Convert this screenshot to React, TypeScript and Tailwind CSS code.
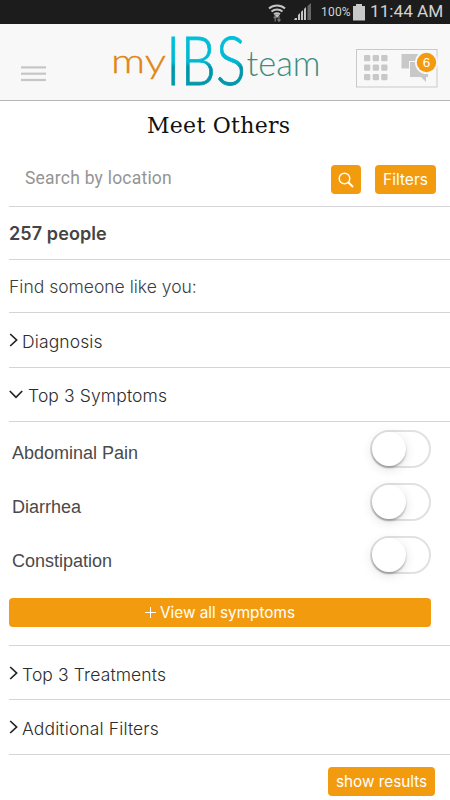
import React, { useState } from "react";

const sans = "font-['Inter','Liberation_Sans',sans-serif]";

function StatusBar() {
  return (
    <div className="flex h-[24px] shrink-0 items-center bg-[#1c1c1c] pl-[268px] text-[#d2d2d2] font-['Roboto',sans-serif]">
      <svg width="18" height="22" viewBox="0 0 18 22" fill="none">
        <path d="M1 7.5a12 12 0 0 1 16 0M3.5 10.5a8.500 8.500 0 0 1 11 0M6 13.300a5 5 0 0 1 6 0" stroke="#c4c4c4" strokeWidth="2" />
        <path d="M9 17 6.500 14.200a4 4 0 0 1 5 0z" fill="#c4c4c4" />
        <path d="M7.200 20.500v-5M5.700 17l1.500-1.800L8.700 17M11 15v5M9.500 18.400l1.500 1.800 1.500-1.800" stroke="#777" strokeWidth="1.200" />
      </svg>
      <svg className="ml-[8px]" width="17" height="18" viewBox="0 0 17 18">
        <path d="M1 15h2v2H0zM4 12l2-2v7H4zM7 9l2-2v10H7zM10 6l2-2v13h-2z" fill="#c4c4c4" />
        <path d="M13.500 3 17 0v17h-3.500z" fill="#666" />
      </svg>
      <span className="ml-[10px] w-[30px] whitespace-nowrap text-[12px] leading-none tracking-[0.2px]">100%</span>
      <svg className="ml-[2px]" width="12" height="17" viewBox="0 0 12 17">
        <path d="M3 0h6v2h3v14.500H0V2h3z" fill="#c8c8c8" />
      </svg>
      <span className="ml-[5px] whitespace-nowrap text-[17.2px] leading-none">11:44 AM</span>
    </div>
  );
}

function Logo() {
  return (
    <svg className="overflow-visible" width="220" height="76" viewBox="107 24 220 76">
      <defs>
        <linearGradient id="teal" x1="0" y1="-48" x2="0" y2="0" gradientUnits="userSpaceOnUse">
          <stop offset="0" stopColor="#00c0d9" />
          <stop offset="0.520" stopColor="#00b8d1" />
          <stop offset="0.620" stopColor="#0095a8" />
          <stop offset="1" stopColor="#0099ac" />
        </linearGradient>
      </defs>
      <text x="111" y="73" textLength="55" lengthAdjust="spacingAndGlyphs" fontSize="33" fontWeight="300" fill="#e08612" stroke="#e08612" strokeWidth=".3" fontFamily="Lato, sans-serif">my</text>
      <text transform="translate(166 85) scale(.835 1)" fontSize="67" fontWeight="300" fill="url(#teal)" stroke="url(#teal)" strokeWidth=".8" fontFamily="Lato, sans-serif">IBS</text>
      <text x="246.500" y="76" textLength="74" lengthAdjust="spacingAndGlyphs" fontSize="36" fontWeight="300" fill="#3e8c82" fontFamily="Lato, sans-serif">team</text>
    </svg>
  );
}

function Header() {
  return (
    <header className="flex h-[77px] shrink-0 items-start border-b border-[#b5b5b5] bg-[#f8f8f8]">
      <button aria-label="Menu" className="ml-[21px] mt-[42px]">
        <svg width="25" height="16" viewBox="0 0 25 16" fill="#c6c6c6">
          <rect y="0.300" width="25" height="2.200" />
          <rect y="6.600" width="25" height="2.200" />
          <rect y="12.900" width="25" height="2.200" />
        </svg>
      </button>
      <div className="ml-[61px]">
        <Logo />
      </div>
      <svg className="ml-[28px] mt-[24px]" width="84" height="40" viewBox="355 48 84 40">
        <rect x="356.500" y="49.500" width="80.500" height="37.500" fill="none" stroke="#c9c9c9" />
        {[55, 64.500, 74].map((y) =>
          [364, 372.700, 381.200].map((x) => <rect key={`${x}-${y}`} x={x} y={y} width="6.300" height="6.300" rx="1.300" fill="#c8c8c8" />)
        )}
        <path d="M401.500 54H420v7h-11v7.500h-7.500z" fill="#c8c8c8" />
        <path d="M410 62h18v15h-2v5l-5-5h-11z" fill="#c8c8c8" />
        <circle cx="426.500" cy="62.500" r="11.500" fill="#f8f8f8" />
        <circle cx="426.500" cy="62.500" r="9.700" fill="#f39b0f" />
        <text x="426.500" y="67.300" textAnchor="middle" fontSize="13.500" fill="#fff" fontFamily="'Liberation Sans', sans-serif">6</text>
      </svg>
    </header>
  );
}

function Section({ label, open = false, className }: { label: string; open?: boolean; className: string }) {
  return (
    <button className={`flex w-full items-center border-b border-[#d4d4d4] text-left text-[17.5px] font-light tracking-[0.12px] text-[#2d2d2d] ${className}`}>
      {open ? (
        <svg className="-mt-[4px] mr-[5px]" width="14" height="10" viewBox="0 0 14 10" fill="none" stroke="#222" strokeWidth="1.700">
          <path d="M.8 1 7 7.300 13.200 1" />
        </svg>
      ) : (
        <svg className="-mt-[5px] mr-[4px]" width="9" height="14" viewBox="0 0 9 14" fill="none" stroke="#222" strokeWidth="1.700">
          <path d="M1.200 1 7.600 7l-6.400 6" />
        </svg>
      )}
      <span>{label}</span>
    </button>
  );
}

function Toggle({ label }: { label: string }) {
  const [on, setOn] = useState(false);
  return (
    <button
      role="switch"
      aria-label={label}
      aria-checked={on}
      onClick={() => setOn(!on)}
      className={`flex h-[38px] w-[61px] items-center rounded-full border-2 border-[#e1e1e1] bg-white ${on ? "justify-end" : ""}`}
    >
      <span className="size-[34px] rounded-full bg-white shadow-[0_2px_2px_rgba(0,0,0,0.25),0_3px_12px_rgba(0,0,0,0.12)]" />
    </button>
  );
}

export default function App() {
  return (
    <div className={`flex h-[800px] w-[450px] flex-col overflow-hidden bg-white ${sans}`}>
      <StatusBar />
      <Header />
      <h1 className="h-[52px] pl-[147px] pt-[9px] text-[22px] leading-[32px] tracking-[0.28px] text-[#111] font-['DejaVu_Serif',serif]">Meet Others</h1>
      <main className="flex flex-col pl-[9px] text-[17.5px] text-[#3d3d3d]">
        <div className="flex h-[54px] items-start border-b border-[#d4d4d4] pt-[12px]">
          <input
            aria-label="Search by location"
            placeholder="Search by location"
            className="-mt-px h-[28px] w-[322px] pl-[16px] text-[17.5px] tracking-[0.22px] outline-none placeholder:text-[#949494] font-['Roboto',sans-serif]"
          />
          <button aria-label="Search" className="flex h-[29px] w-[30px] items-center justify-center rounded-[4px] bg-[#f39b0f]">
            <svg width="16" height="16" viewBox="0 0 16 16" fill="none" stroke="#fff" strokeWidth="1.400">
              <circle cx="6.500" cy="6.500" r="5.300" />
              <path d="m10.300 10.300 4.700 4.700" strokeWidth="2" />
            </svg>
          </button>
          <button className="ml-[14px] h-[29px] w-[61px] rounded-[4px] bg-[#f39b0f] text-[15.500px] leading-[29px] text-white">Filters</button>
        </div>
        <div className="h-[53px] border-b border-[#d4d4d4] text-[18px] font-semibold leading-[54px] tracking-[0.1px] text-[#444]">257 people</div>
        <div className="h-[53px] border-b border-[#d4d4d4] font-light leading-[53px]">Find someone like you:</div>
        <Section label="Diagnosis" className="h-[55px] pt-[5px]" />
        <Section label="Top 3 Symptoms" open className="h-[54px] pt-[4px]" />
        <div className="flex h-[224px] flex-col border-b border-[#d4d4d4] pr-[19px] pt-[8px]">
          <div className="flex h-[168px]">
            <div className="flex flex-1 flex-col pl-[3px] pt-[9px] text-[18px] leading-[28px] text-[#4a4a4a] font-['Liberation_Sans',sans-serif]">
              <span className="h-[54px] shrink-0">Abdominal Pain</span>
              <span className="h-[54px] shrink-0">Diarrhea</span>
              <span className="h-[51px] shrink-0">Constipation</span>
            </div>
            <div className="flex flex-col gap-[15px]">
              <Toggle label="Abdominal Pain" />
              <Toggle label="Diarrhea" />
              <Toggle label="Constipation" />
            </div>
          </div>
          <button className="flex h-[29px] shrink-0 items-center justify-center rounded-[4px] bg-[#f39b0f] pt-[2px] text-[15.300px] text-white">
            <svg className="-mt-[2px] mr-[4px]" width="11" height="11" viewBox="0 0 11 11" stroke="#fff">
              <path d="M5.500 0v11M0 5.500h11" />
            </svg>
            View all symptoms
          </button>
        </div>
        <Section label="Top 3 Treatments" className="h-[54px] pt-[5px]" />
        <Section label="Additional Filters" className="h-[55px] pt-[5px]" />
        <button className="ml-[319px] mt-[12px] h-[29px] w-[107px] rounded-[4px] bg-[#f39b0f] text-[15.300px] leading-[28px] text-white">show results</button>
      </main>
    </div>
  );
}
